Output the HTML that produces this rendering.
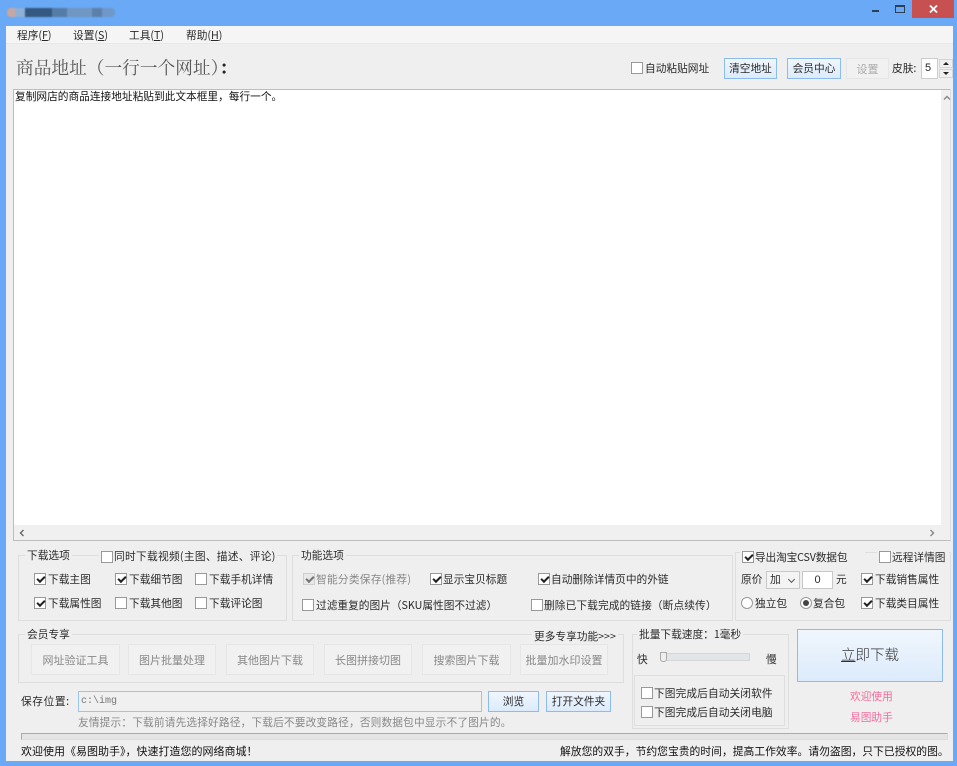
<!DOCTYPE html>
<html lang="zh"><head><meta charset="utf-8"><title>易图助手</title>
<style>
html,body{margin:0;padding:0}
#w{position:relative;width:957px;height:766px;overflow:hidden;background:#69a9f5;font:10.7px/16px "Noto Sans CJK SC","WenQuanYi Zen Hei",sans-serif;color:#2a2a2a}
#w div,#w span,#w i{position:absolute;box-sizing:border-box;white-space:nowrap;font-style:normal}
.c{width:12px;height:12px;background:#fff;border:1px solid #999}
.k::after{content:"";position:absolute;left:2px;top:2px;width:6px;height:3px;border-left:2px solid #222;border-bottom:2px solid #222;transform:rotate(-45deg)}
.g{border:1px solid #dedede}
.l{background:#efefef;padding:0 2px}
.b{background:linear-gradient(#f0f6fd,#dcebfb);border:1px solid #8dbcec;text-align:center;line-height:20px}
.d{background:#f1f1f1;border:1px solid #e6e6e6;color:#888;text-align:center;line-height:30px;font-size:11px}
.r{width:12px;height:12px;border:1px solid #999;border-radius:50%;background:#fff}
</style></head><body><div id="w">
<div style="left:7px;top:8px;width:108px;height:9px;border-radius:4px;filter:blur(.8px);background:linear-gradient(90deg,#c9a6a0 0 8px,#8fb0d4 8px 18px,#35587f 18px 45px,#557ca6 45px 60px,#7096c2 60px 85px,#5d80a8 85px 95px,#6f98c8 95px)"></div>
<div style="left:872px;top:10px;width:7px;height:2px;background:#2b3f55"></div>
<div style="left:895px;top:5px;width:10px;height:8px;border:1px solid #2b3f55;border-top:2px solid #2b3f55"></div>
<div style="left:912px;top:0;width:42px;height:18px;background:#c75050"></div>
<svg style="position:absolute;left:929px;top:5px" width="9" height="8" viewBox="0 0 9 8"><path d="M1 0.5L8 7.5M8 0.5L1 7.5" stroke="#fff" stroke-width="1.8" fill="none"/></svg>

<div style="left:6px;top:26px;width:947px;height:735px;background:#efefef"></div>
<div style="left:6px;top:26px;width:947px;height:18px;background:#f5f5f5;border-bottom:1px solid #e8e8e8"></div>
<span style="left:17px;top:28px">程序(<u>F</u>)</span>
<span style="left:73px;top:28px">设置(<u>S</u>)</span>
<span style="left:129px;top:28px">工具(<u>T</u>)</span>
<span style="left:186px;top:28px">帮助(<u>H</u>)</span>

<span style="left:16px;top:57px;font:17.7px/22px 'Noto Serif CJK SC',serif;color:#5a5a5a">商品地址（一行一个网址）<b style="color:#222">：</b></span>
<i class="c" style="left:631px;top:62px"></i><span style="left:645px;top:61px">自动粘贴网址</span>
<div class="b" style="left:724px;top:58px;width:53px;height:21px">清空地址</div>
<div class="b" style="left:787px;top:58px;width:54px;height:21px">会员中心</div>
<div class="d" style="left:846px;top:58px;width:43px;height:21px;line-height:20px;color:#aaa">设置</div>
<span style="left:892px;top:61px">皮肤:</span>
<div style="left:921px;top:58px;width:17px;height:21px;background:#fff;border:1px solid #ccc;font:11px/19px 'Liberation Sans',sans-serif;padding-left:3px">5</div>
<div style="left:939px;top:59px;width:14px;height:9px;background:#f0f0f0;border:1px solid #d5d5d5"></div>
<div style="left:943px;top:62px;width:0;height:0;border:3px solid transparent;border-bottom:3px solid #222;border-top:0"></div>
<div style="left:939px;top:69px;width:14px;height:9px;background:#f0f0f0;border:1px solid #d5d5d5"></div>
<div style="left:943px;top:72px;width:0;height:0;border:3px solid transparent;border-top:3px solid #222;border-bottom:0"></div>

<div style="left:13px;top:89px;width:938px;height:452px;background:#fff;border:1px solid #bdbdbd;border-right-color:#ddd"></div>
<span style="left:15px;top:89px;color:#111">复制网店的商品连接地址粘贴到此文本框里，每行一个。</span>
<div style="left:941px;top:90px;width:9px;height:436px;background:#f0f0f0"></div>
<div style="left:14px;top:525px;width:936px;height:15px;background:#f0f0f0"></div>
<svg style="position:absolute;left:19px;top:529px" width="6" height="8" viewBox="0 0 6 8"><path d="M4.5 1L1.5 4L4.5 7" stroke="#666" stroke-width="1.4" fill="none"/></svg>
<svg style="position:absolute;left:929px;top:529px" width="6" height="8" viewBox="0 0 6 8"><path d="M1.5 1L4.5 4L1.5 7" stroke="#888" stroke-width="1.4" fill="none"/></svg>
<svg style="position:absolute;left:943px;top:95px" width="8" height="6" viewBox="0 0 8 6"><path d="M1 4.5L4 1.5L7 4.5" stroke="#888" stroke-width="1.4" fill="none"/></svg>

<div class="g" style="left:18px;top:555px;width:269px;height:66px"></div>
<span class="l" style="left:25px;top:548px">下载选项</span>
<span class="l" style="left:99px;top:549px;width:178px">&nbsp;</span>
<i class="c" style="left:101px;top:551px"></i><span style="left:114px;top:549px;letter-spacing:.3px">同时下载视频(主图、描述、评论)</span>
<i class="c k" style="left:34px;top:573px"></i><span style="left:48px;top:572px">下载主图</span>
<i class="c k" style="left:115px;top:573px"></i><span style="left:129px;top:572px">下载细节图</span>
<i class="c" style="left:195px;top:573px"></i><span style="left:209px;top:572px">下载手机详情</span>
<i class="c k" style="left:34px;top:597px"></i><span style="left:48px;top:596px">下载属性图</span>
<i class="c" style="left:115px;top:597px"></i><span style="left:129px;top:596px">下载其他图</span>
<i class="c" style="left:195px;top:597px"></i><span style="left:209px;top:596px">下载评论图</span>

<div class="g" style="left:292px;top:555px;width:441px;height:66px"></div>
<span class="l" style="left:299px;top:548px">功能选项</span>
<i class="c k" style="left:303px;top:573px;background:#e4e4e4;border-color:#bbb;opacity:.6"></i><span style="left:316px;top:572px;color:#888;letter-spacing:.25px">智能分类保存(推荐)</span>
<i class="c k" style="left:430px;top:573px"></i><span style="left:443px;top:572px">显示宝贝标题</span>
<i class="c k" style="left:538px;top:573px"></i><span style="left:551px;top:572px">自动删除详情页中的外链</span>
<i class="c" style="left:302px;top:599px"></i><span style="left:316px;top:598px">过滤重复的图片（SKU属性图不过滤）</span>
<i class="c" style="left:531px;top:599px"></i><span style="left:544px;top:598px;letter-spacing:.1px">删除已下载完成的链接（断点续传）</span>

<div class="g" style="left:735px;top:552px;width:216px;height:69px"></div>
<span class="l" style="left:740px;top:549px;width:125px">&nbsp;</span>
<span class="l" style="left:877px;top:549px;width:72px">&nbsp;</span>
<i class="c k" style="left:742px;top:551px"></i><span style="left:755px;top:550px;letter-spacing:-.15px">导出淘宝CSV数据包</span>
<i class="c" style="left:879px;top:551px"></i><span style="left:892px;top:550px">远程详情图</span>
<span style="left:741px;top:572px">原价</span>
<div style="left:766px;top:571px;width:34px;height:18px;background:#f4f4f4;border:1px solid #c8c8c8;line-height:16px;padding-left:3px">加</div>
<div style="left:789px;top:577px;width:5px;height:5px;border-right:1px solid #555;border-bottom:1px solid #555;transform:rotate(45deg)"></div>
<div style="left:802px;top:571px;width:31px;height:18px;background:#fff;border:1px solid #c8c8c8;text-align:center;font:11px/16px 'Liberation Sans',sans-serif">0</div>
<span style="left:836px;top:572px">元</span>
<i class="c k" style="left:861px;top:573px"></i><span style="left:875px;top:572px">下载销售属性</span>
<i class="r" style="left:741px;top:597px"></i><span style="left:755px;top:596px">独立包</span>
<i class="r" style="left:800px;top:597px"></i><i style="left:803px;top:600px;width:6px;height:6px;border-radius:50%;background:#444"></i><span style="left:813px;top:596px">复合包</span>
<i class="c k" style="left:861px;top:597px"></i><span style="left:875px;top:596px">下载类目属性</span>

<div class="g" style="left:18px;top:634px;width:606px;height:49px"></div>
<span class="l" style="left:25px;top:627px">会员专享</span>
<span class="l" style="left:532px;top:629px">更多专享功能&gt;&gt;&gt;</span>
<div class="d" style="left:31px;top:644px;width:89px;height:31px">网址验证工具</div>
<div class="d" style="left:128px;top:644px;width:88px;height:31px">图片批量处理</div>
<div class="d" style="left:226px;top:644px;width:88px;height:31px">其他图片下载</div>
<div class="d" style="left:324px;top:644px;width:88px;height:31px">长图拼接切图</div>
<div class="d" style="left:422px;top:644px;width:89px;height:31px">搜索图片下载</div>
<div class="d" style="left:520px;top:644px;width:88px;height:31px">批量加水印设置</div>

<span style="left:21px;top:694px;letter-spacing:.6px">保存位置:</span>
<div style="left:78px;top:691px;width:404px;height:21px;background:#f0f0f0;border:1px solid #9cc5ee;color:#777;font:10px/19px 'Liberation Mono',monospace;padding-left:2px">c:\img</div>
<div class="b" style="left:488px;top:691px;width:51px;height:21px">浏览</div>
<div class="b" style="left:546px;top:691px;width:65px;height:21px">打开文件夹</div>
<span style="left:78px;top:715px;color:#888;letter-spacing:.15px">友情提示：下载前请先选择好路径，下载后不要改变路径，否则数据包中显示不了图片的。</span>

<div class="g" style="left:632px;top:634px;width:157px;height:95px"></div>
<span class="l" style="left:637px;top:627px">批量下载速度：1毫秒</span>
<span style="left:637px;top:652px">快</span><span style="left:766px;top:652px">慢</span>
<div style="left:660px;top:653px;width:90px;height:8px;background:#e3e6e8;border:1px solid #d6d6d6"></div>
<div style="left:660px;top:652px;width:7px;height:10px;background:#eee;border:1px solid #aaa;border-radius:0 0 3px 3px"></div>
<div class="g" style="left:634px;top:675px;width:151px;height:51px"></div>
<i class="c" style="left:641px;top:687px"></i><span style="left:654px;top:686px;letter-spacing:.1px">下图完成后自动关闭软件</span>
<i class="c" style="left:641px;top:706px"></i><span style="left:654px;top:705px;letter-spacing:.1px">下图完成后自动关闭电脑</span>

<div class="b" style="left:797px;top:629px;width:146px;height:53px;font-size:14.5px;line-height:50px;color:#333;font-weight:300"><u>立</u>即下载</div>
<span style="left:850px;top:689px;color:#f76a9c">欢迎使用</span>
<span style="left:850px;top:710px;color:#f76a9c">易图助手</span>

<div style="left:21px;top:733px;width:927px;height:7px;background:#e4e4e4;border:1px solid #aaa;border-right-color:#ddd;border-bottom-color:#ddd"></div>
<span style="left:21px;top:743px;color:#111;font-size:11px">欢迎使用《易图助手》，快速打造您的网络商城！</span>
<span style="left:560px;top:743px;color:#111;font-size:10.8px">解放您的双手，节约您宝贵的时间，提高工作效率。请勿盗图，只下已授权的图。</span>
</div></body></html>
